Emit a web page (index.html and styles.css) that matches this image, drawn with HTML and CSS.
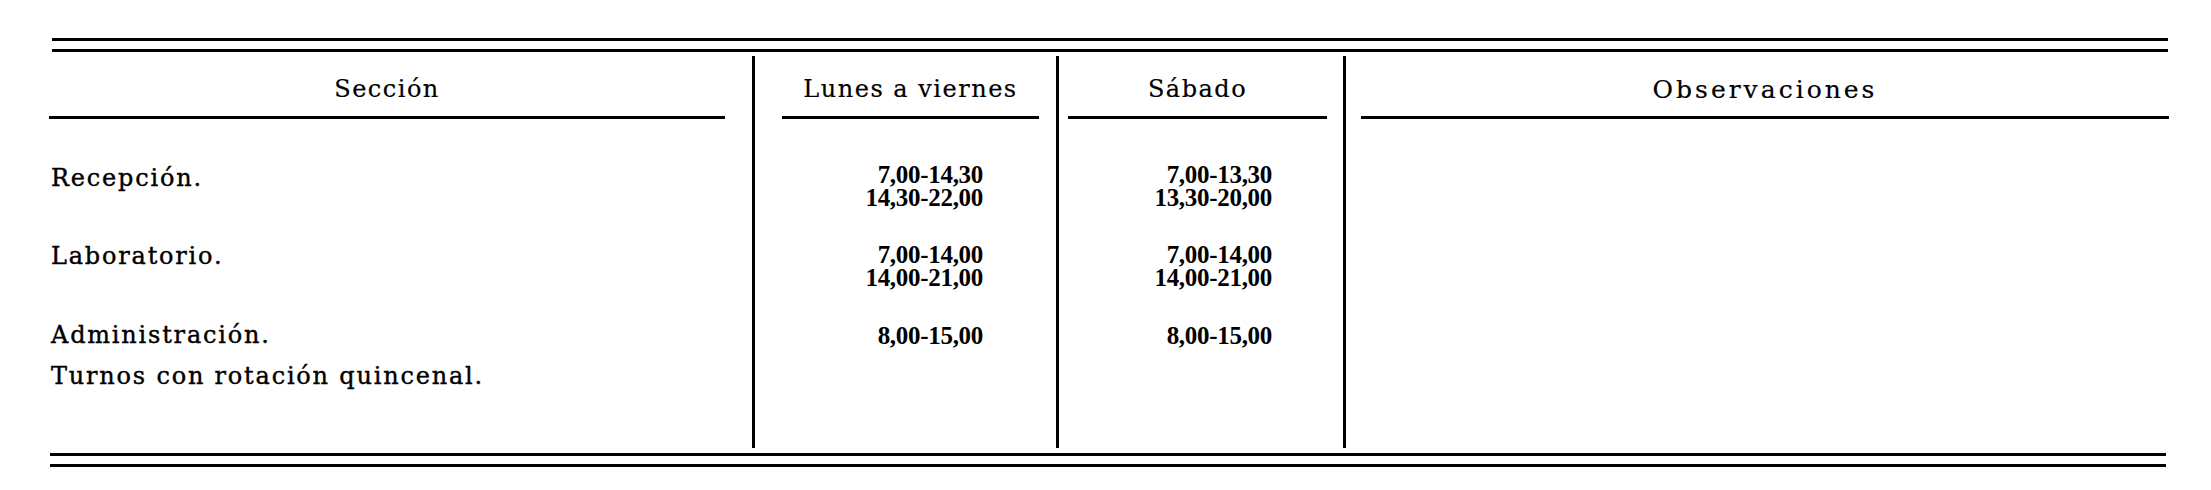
FILE: index.html
```html
<!DOCTYPE html>
<html lang="es">
<head>
<meta charset="utf-8">
<title>Horario de trabajo</title>
<link rel="stylesheet" href="styles.css">
</head>
<body>
<div class="sheet">
  <div class="rule rule-top"></div>
  <div class="grid">
    <div class="cell c1 head"><div class="hd hd1">Sección</div></div>
    <div class="cell c2 head"><div class="hd hd2">Lunes a viernes</div></div>
    <div class="cell c3 head"><div class="hd hd3">Sábado</div></div>
    <div class="cell c4 head"><div class="hd hd4">Observaciones</div></div>

    <div class="cell c1 r1 txt">Recepción.</div>
    <div class="cell c2 r1 num">7,00-14,30<br>14,30-22,00</div>
    <div class="cell c3 r1 num">7,00-13,30<br>13,30-20,00</div>
    <div class="cell c4 r1"></div>

    <div class="cell c1 r2 txt">Laboratorio.</div>
    <div class="cell c2 r2 num">7,00-14,00<br>14,00-21,00</div>
    <div class="cell c3 r2 num">7,00-14,00<br>14,00-21,00</div>
    <div class="cell c4 r2"></div>

    <div class="cell c1 r3 txt">Administración.</div>
    <div class="cell c2 r3 num">8,00-15,00</div>
    <div class="cell c3 r3 num">8,00-15,00</div>
    <div class="cell c4 r3"></div>

    <div class="cell c1 r4 txt">Turnos con rotación quincenal.</div>
    <div class="cell c2 r4"></div>
    <div class="cell c3 r4"></div>
    <div class="cell c4 r4"></div>
  </div>
  <div class="rule rule-bottom"></div>
</div>
</body>
</html>
```

FILE: styles.css
```css
html, body {
  margin: 0;
  padding: 0;
  background: #ffffff;
}

body {
  color: #000000;
  font-family: "DejaVu Serif", "Liberation Serif", serif;
  font-size: 24px;
  line-height: 23px;
}

.sheet {
  width: 2120px;
  margin-left: 49px;
  padding-top: 38px;
}

.rule {
  height: 8px;
  border-top: 3px solid #000;
  border-bottom: 3px solid #000;
}

.rule-top {
  margin-left: 3px;
  margin-right: 1px;
}

.rule-bottom {
  margin-left: 1px;
  margin-right: 3px;
}

.grid {
  display: grid;
  grid-template-columns: 703px 304px 287px 826px;
  margin-top: 4px;
  margin-bottom: 5px;
}

.cell {
  box-sizing: border-box;
}

.c2, .c3, .c4 {
  border-left: 3px solid #000;
}

.head {
  height: 63px;
  display: flex;
}

.hd {
  flex: 1;
  border-bottom: 3px solid #000;
  display: flex;
  align-items: center;
  justify-content: center;
  font-size: 24px;
  letter-spacing: 1.5px;
  padding-top: 6px;
  box-sizing: border-box;
  -webkit-text-stroke: 0.2px #000;
}

.hd1 { margin-right: 27px; }
.hd2 { margin-left: 27px; margin-right: 17px; }
.hd3 { margin-left: 9px; margin-right: 16px; }
.hd4 { margin-left: 15px; font-size: 25px; letter-spacing: 3px; }

.txt {
  padding-left: 2px;
  letter-spacing: 1.8px;
  -webkit-text-stroke: 0.4px #000;
}

.num {
  text-align: right;
  font-family: "Liberation Serif", "DejaVu Serif", serif;
  font-size: 25px;
  letter-spacing: -0.3px;
  font-weight: bold;
}

.c2.num { padding-right: 73px; }
.c3.num { padding-right: 71px; }

.r1 { padding-top: 44px; }
.r1.txt { padding-top: 48px; }
.r2 { padding-top: 34px; }
.r2.txt { padding-top: 36px; }
.r3 { padding-top: 35px; }
.r4 { padding-top: 18px; padding-bottom: 60px; }
```
